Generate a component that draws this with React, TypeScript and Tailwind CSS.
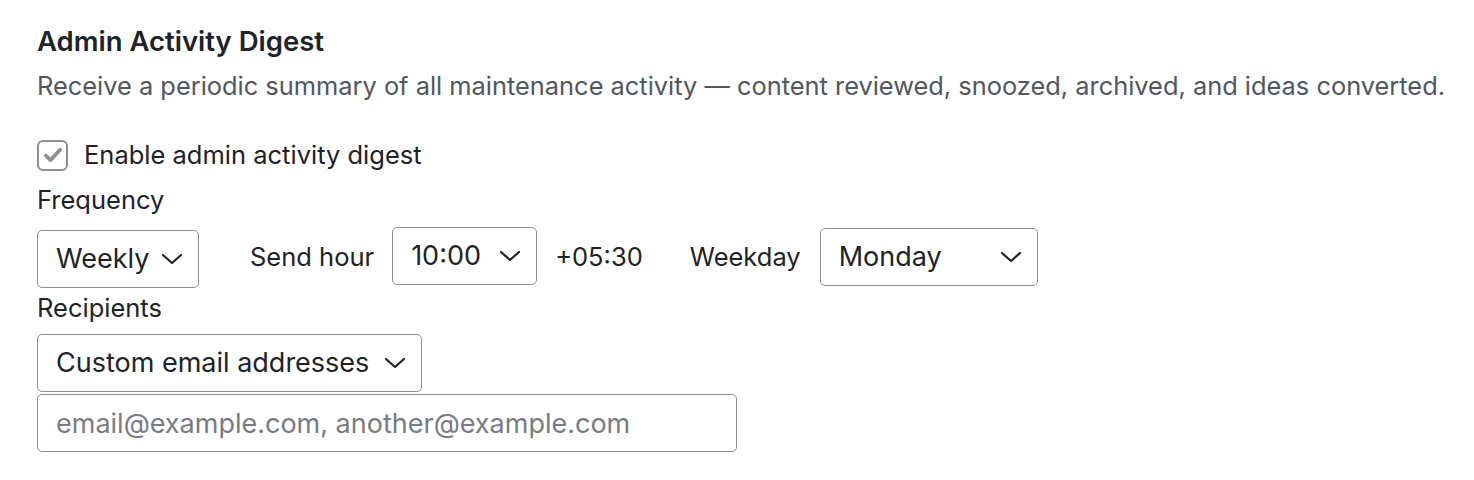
import { useState } from "react";

function Chevron() {
  return (
    <svg width="22" height="12" viewBox="0 0 22 12" fill="none" className="shrink-0">
      <path d="M2 2l9 8 9-8" stroke="#1d2327" strokeWidth="2.2" strokeLinecap="round" strokeLinejoin="round" />
    </svg>
  );
}

function Select({ value, className }: { value: string; className: string }) {
  return (
    <div
      className={
        "flex items-center justify-between h-[58px] pl-[18px] pr-[15px] border border-[#8c8f94] rounded-[5px] bg-white text-[27px] text-[#1d2327] " +
        className
      }
    >
      <span>{value}</span>
      <Chevron />
    </div>
  );
}

export default function App() {
  const [enabled, setEnabled] = useState(true);

  return (
    <div className="min-h-[480px] bg-white pl-[37px] pt-[26px] font-['Inter',sans-serif] text-[#1d2327]">
      <h3 className="text-[27.5px] leading-[30px] font-semibold">Admin Activity Digest</h3>
      <p className="mt-[15px] text-[25.4px] leading-[30px] text-[#50575e]">
        Receive a periodic summary of all maintenance activity — content reviewed, snoozed, archived, and ideas converted.
      </p>

      <label className="mt-[38px] flex items-center gap-[16px] h-[32px] text-[25.5px] cursor-pointer">
        <span
          onClick={() => setEnabled(!enabled)}
          className="flex items-center justify-center w-[31px] h-[31px] border-2 border-[#8c8f94] rounded-[6px] bg-white"
        >
          {enabled && (
            <svg width="22" height="22" viewBox="0 0 20 20">
              <path d="M3.5 10.5l4.2 4.2 8.8-9.5" stroke="#8c8f94" strokeWidth="3.4" fill="none" strokeLinecap="round" strokeLinejoin="round" />
            </svg>
          )}
        </span>
        Enable admin activity digest
      </label>

      <div className="mt-[14px] text-[25.5px] leading-[30px]">Frequency</div>
      <div className="mt-[12px] flex items-center h-[61px] text-[25.5px]">
        <Select value="Weekly" className="w-[162px] self-end" />
        <span className="ml-[51px]">Send hour</span>
        <Select value="10:00" className="ml-[18px] w-[145px] self-start" />
        <span className="ml-[18px]">+05:30</span>
        <span className="ml-[47px]">Weekday</span>
        <Select value="Monday" className="ml-[19px] w-[218px] self-start mt-[1px]" />
      </div>

      <div className="mt-[5px] text-[25.5px] leading-[30px]">Recipients</div>
      <Select value="Custom email addresses" className="mt-[11px] w-[385px]" />
      <input
        className="mt-[2px] block w-[700px] h-[58px] px-[18px] border border-[#8c8f94] rounded-[5px] text-[27px] placeholder:text-[#787c82] outline-none"
        placeholder="email@example.com, another@example.com"
      />
    </div>
  );
}
